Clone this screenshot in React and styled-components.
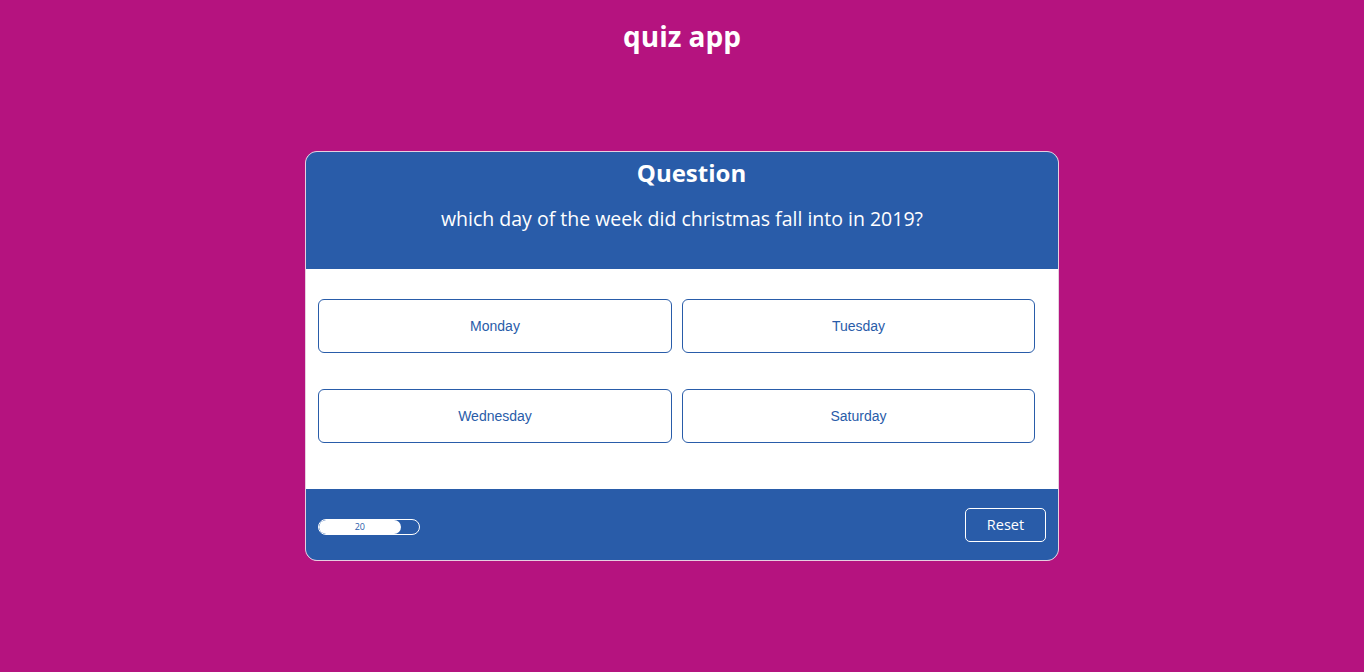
import React from "react";
import styled, { createGlobalStyle } from "styled-components";

const GlobalStyle = createGlobalStyle`
  html, body {
    margin: 0;
    padding: 0;
    background: #b5137f;
  }
  body {
    font-family: "Open Sans", "Noto Sans", sans-serif;
    min-height: 672px;
  }
`;

const Page = styled.div`
  display: flex;
  flex-direction: column;
  align-items: center;
  padding-top: 14px;
`;

const Title = styled.h1`
  margin: 0;
  font-size: 28px;
  line-height: 44px;
  font-weight: 700;
  color: #fff;
`;

const Card = styled.div`
  margin-top: 93px;
  width: 752px;
  border: 1px solid #e6cfe0;
  border-radius: 12px;
  overflow: hidden;
  background: #fff;
`;

const Header = styled.div`
  background: #295ca9;
  height: 117px;
  display: flex;
  flex-direction: column;
  align-items: center;
  color: #fff;
`;

const Heading = styled.h2`
  margin: 5px 0 0 19px;
  font-size: 24px;
  line-height: 32px;
  font-weight: 700;
`;

const QuestionText = styled.p`
  margin: 17px 0 0;
  font-size: 19.5px;
  line-height: 26px;
`;

const Answers = styled.div`
  display: grid;
  grid-template-columns: 354px 353px;
  column-gap: 10px;
  row-gap: 36px;
  padding: 30px 23px 46px 12px;
`;

const Answer = styled.button`
  height: 54px;
  padding-bottom: 2px;
  border: 1px solid #295ca9;
  border-radius: 6px;
  background: #fff;
  color: #295ca9;
  font-family: "Liberation Sans", Arial, sans-serif;
  font-size: 14px;
  cursor: pointer;
`;

const Footer = styled.div`
  background: #295ca9;
  height: 71px;
  display: flex;
  align-items: center;
  justify-content: space-between;
  padding: 0 12px;
  box-sizing: border-box;
`;

const Progress = styled.div`
  width: 102px;
  height: 16px;
  box-sizing: border-box;
  border: 1px solid #fff;
  border-radius: 8px;
  overflow: hidden;
  margin-top: 4px;
`;

const ProgressFill = styled.div`
  height: 100%;
  background: #fff;
  border-radius: 8px;
  display: flex;
  align-items: center;
  justify-content: center;
  color: #295ca9;
  font-size: 9px;
`;

const ResetButton = styled.button`
  width: 81px;
  height: 34px;
  border: 1px solid #fff;
  border-radius: 5px;
  background: transparent;
  color: #fff;
  font-family: "Open Sans", "Noto Sans", sans-serif;
  font-size: 14.5px;
  cursor: pointer;
`;

const answers = ["Monday", "Tuesday", "Wednesday", "Saturday"];

export default function App() {
  const timeLeft = 20;
  return (
    <Page>
      <GlobalStyle />
      <Title>quiz app</Title>
      <Card>
        <Header>
          <Heading>Question</Heading>
          <QuestionText>which day of the week did christmas fall into in 2019?</QuestionText>
        </Header>
        <Answers>
          {answers.map((a) => (
            <Answer key={a}>{a}</Answer>
          ))}
        </Answers>
        <Footer>
          <Progress>
            <ProgressFill style={{ width: `${(timeLeft / 24.5) * 100}%` }}>
              {timeLeft}
            </ProgressFill>
          </Progress>
          <ResetButton>Reset</ResetButton>
        </Footer>
      </Card>
    </Page>
  );
}
